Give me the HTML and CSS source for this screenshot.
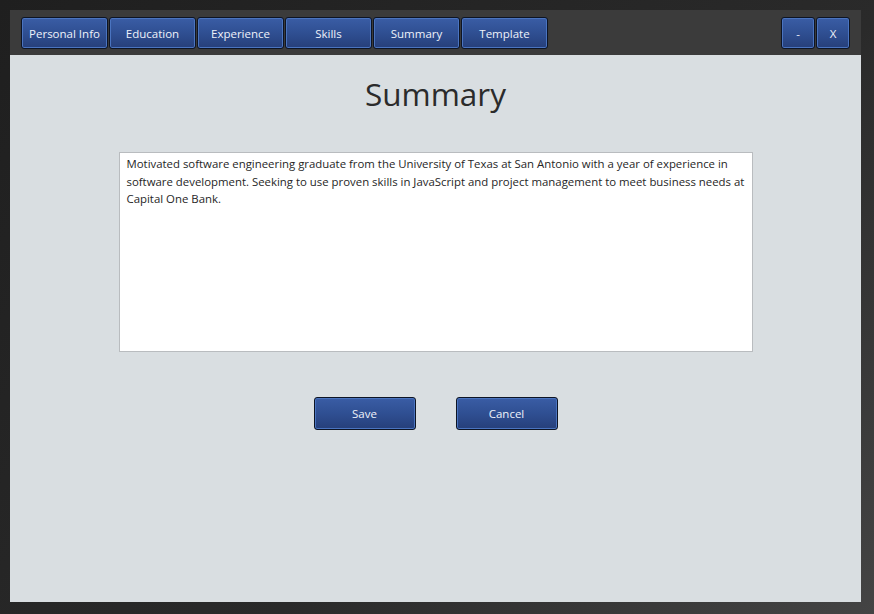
FILE: index.html
```html
<!DOCTYPE html>
<html lang="en">
<head>
<meta charset="utf-8">
<title>Resume Builder - Summary</title>
<link rel="stylesheet" href="styles.css">
</head>
<body>
<div class="window">
  <header class="titlebar">
    <nav class="tabs">
      <button class="btn tab">Personal Info</button>
      <button class="btn tab">Education</button>
      <button class="btn tab">Experience</button>
      <button class="btn tab">Skills</button>
      <button class="btn tab">Summary</button>
      <button class="btn tab">Template</button>
    </nav>
    <div class="controls">
      <button class="btn ctl">-</button>
      <button class="btn ctl">X</button>
    </div>
  </header>
  <main class="content">
    <h1 class="title">Summary</h1>
    <div class="editor">Motivated software engineering graduate from the University of Texas at San Antonio with a year of experience in software development. Seeking to use proven skills in JavaScript and project management to meet business needs at Capital One Bank.</div>
    <div class="actions">
      <button class="btn action">Save</button>
      <button class="btn action">Cancel</button>
    </div>
  </main>
</div>
</body>
</html>
```

FILE: styles.css
```css
* { box-sizing: border-box; }
html, body { margin: 0; padding: 0; }
body {
  width: 874px;
  height: 614px;
  overflow: hidden;
  background: linear-gradient(135deg, #1f1f1f 0%, #2a2a2a 60%, #444 100%);
  font-family: "Open Sans", "Noto Sans", sans-serif;
  padding: 10px 13px 12px 10px;
}
.window {
  width: 851px;
  height: 592px;
  display: flex;
  flex-direction: column;
}
.titlebar {
  height: 45px;
  background: #3b3b3b;
  display: flex;
  justify-content: space-between;
  align-items: flex-start;
  padding: 7px 11px 0 11px;
}
.tabs, .controls { display: flex; gap: 1px; }
.btn {
  font-family: "Open Sans", "Noto Sans", sans-serif;
  color: #eef2fa;
  font-size: 11.5px;
  background: linear-gradient(180deg, #3a5da5 0%, #2f4f92 50%, #263f7a 100%);
  border: 1px solid #0d1424;
  border-radius: 3px;
  box-shadow: inset 0 0 0 1px #4a74c0;
  padding: 0;
  cursor: pointer;
}
.tab { width: 87px; height: 32px; }
.ctl { width: 34px; height: 32px; }
.content {
  flex: 1;
  background: #d9dee1;
  display: flex;
  flex-direction: column;
  align-items: center;
}
.title {
  margin: 17px 0 0 0;
  font-weight: 400;
  font-size: 31.5px;
  line-height: 44px;
  color: #2b2b2b;
}
.editor {
  margin-top: 36px;
  width: 634px;
  height: 200px;
  background: #fff;
  border: 1px solid #b9bcbf;
  padding: 2px 2px 2px 7px;
  font-size: 11.4px;
  line-height: 17.5px;
  color: #262626;
}
.actions {
  margin-top: 45px;
  display: flex;
  gap: 40px;
}
.action { width: 102px; height: 33px; }
```
